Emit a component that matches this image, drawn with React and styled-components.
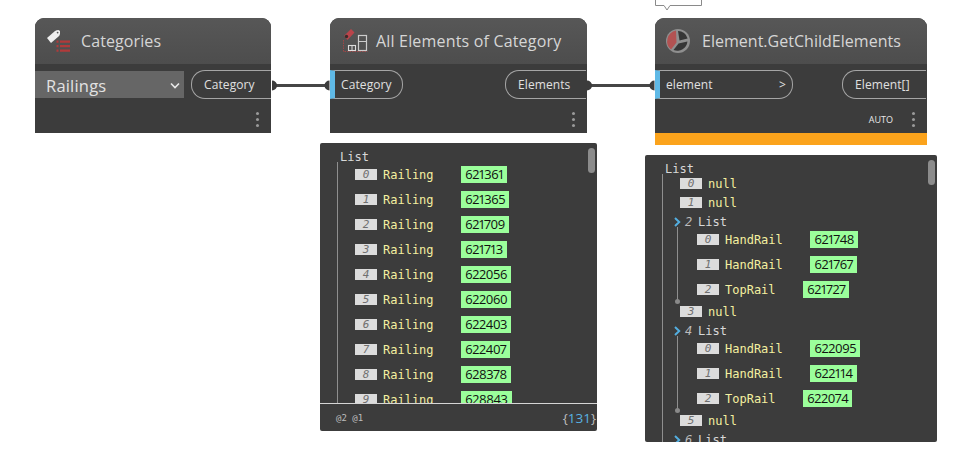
import React from "react";
import styled, { createGlobalStyle } from "styled-components";

const Global = createGlobalStyle`
  html, body { margin: 0; padding: 0; background: #fff; }
  body { font-family: "Open Sans", "Noto Sans", sans-serif; overflow: hidden; }
`;

const Canvas = styled.div`
  position: relative;
  width: 962px;
  height: 454px;
  overflow: hidden;
  background: #fff;
`;

const Node = styled.section`
  position: absolute;
  left: ${(p) => p.$x}px;
  top: 18px;
  width: ${(p) => p.$w}px;
  background: #3c3c3c;
  border-radius: 9px 9px 0 0;
  overflow: hidden;
`;

const Header = styled.header`
  height: 46px;
  display: flex;
  align-items: center;
  gap: ${(p) => p.$gap}px;
  padding-left: ${(p) => p.$pad}px;
  background: linear-gradient(#575757, #4d4d4d);
  color: #d6d6d6;
  font-size: 16px;
  line-height: 48px;
  letter-spacing: ${(p) => p.$ls}px;
`;

const Body = styled.div`
  height: 35px;
  padding-top: 6px;
  box-sizing: border-box;
  display: flex;
  justify-content: space-between;
  align-items: flex-start;
`;

const Footer = styled.footer`
  height: 34px;
  padding: 10px 12px 0 0;
  box-sizing: border-box;
  display: flex;
  justify-content: flex-end;
  align-items: flex-start;
  gap: 19px;
`;

const Dots = styled.span`
  display: flex;
  flex-direction: column;
  gap: 3px;
  width: 3px;
  margin-top: 3px;
  & > i {
    width: 3px;
    height: 3px;
    border-radius: 50%;
    background: #9a9a9a;
  }
`;

const Auto = styled.span`
  color: #e8e8e8;
  font-size: 9px;
  line-height: 22px;
`;

const ErrorBar = styled.div`
  height: 12px;
  background: #fba31c;
`;

const Dropdown = styled.div`
  width: 149px;
  height: 27px;
  margin-top: 1px;
  padding: 2px 3px 0 11px;
  box-sizing: border-box;
  display: flex;
  align-items: center;
  justify-content: space-between;
  background: #666;
  color: #e2e2e2;
  font-size: 16.5px;
  line-height: 25px;
  letter-spacing: 0.2px;
`;

const OutPort = styled.div`
  width: ${(p) => p.$w}px;
  height: 29px;
  margin-right: ${(p) => p.$mr || 0}px;
  padding-left: 12px;
  box-sizing: border-box;
  display: flex;
  align-items: center;
  color: #e0e0e0;
  font-size: 12px;
  letter-spacing: 0.1px;
  border: 1px solid #a5a5a5;
  border-right: none;
  border-radius: 14px 0 0 14px;
`;

const InPort = styled.div`
  width: ${(p) => p.$w}px;
  height: 29px;
  padding: 0 6px 0 6px;
  box-sizing: border-box;
  display: flex;
  align-items: center;
  justify-content: space-between;
  color: #e0e0e0;
  font-size: 12px;
  letter-spacing: 0.1px;
  border: 1px solid #a5a5a5;
  border-left: 5px solid #5fb9e6;
  border-radius: 0 14px 14px 0;
`;

const Wires = styled.svg`
  position: absolute;
  left: 0;
  top: 0;
  pointer-events: none;
`;

const Bubble = styled.svg`
  position: absolute;
  left: 655px;
  top: -1px;
`;

const Watch = styled.section`
  position: absolute;
  left: ${(p) => p.$x}px;
  top: ${(p) => p.$y}px;
  width: ${(p) => p.$w}px;
  height: ${(p) => p.$h}px;
  background: #3c3c3c;
  border-radius: 2px;
  display: flex;
  flex-direction: column;
  font-family: "DejaVu Sans Mono", "Liberation Mono", monospace;
`;

const Scroll = styled.div`
  position: absolute;
  right: 2px;
  top: 5px;
  width: 7px;
  height: 25px;
  border-radius: 4px;
  background: #8c8c8c;
`;

const Viewport = styled.div`
  flex: 1;
  min-height: 0;
  overflow: hidden;
  padding: ${(p) => p.$top}px 0 0 20px;
`;

const ListTitle = styled.div`
  color: #d8d8d8;
  font-size: 12px;
  line-height: 14px;
`;

const Tree = styled.div`
  position: relative;
  margin-left: -3px;
  padding-left: ${(p) => p.$pad}px;
  border-left: 1px solid #8f8f8f;
  display: flex;
  flex-direction: column;
  margin-top: ${(p) => p.$mt || 0}px;
`;

const EndDot = styled.i`
  position: absolute;
  left: -3px;
  bottom: -2px;
  width: 5px;
  height: 5px;
  border-radius: 50%;
  background: #8a8a8a;
`;

const Row = styled.div`
  height: ${(p) => p.$h}px;
  display: flex;
  align-items: center;
  flex: none;
`;

const Index = styled.span`
  flex: none;
  width: 22px;
  height: 11px;
  margin-right: 6px;
  background: #dcdcdc;
  color: #707070;
  font-size: 11px;
  font-style: italic;
  line-height: 11px;
  text-align: center;
`;

const Label = styled.span`
  color: #f4f0a0;
  font-size: 12px;
`;

const Value = styled.span`
  flex: none;
  margin-left: 27.7px;
  height: 17px;
  padding: 0 4px;
  background: #9bff9b;
  color: #111;
  font-family: "Open Sans", "Noto Sans", sans-serif;
  font-size: 13px;
  font-variant-numeric: proportional-nums;
  letter-spacing: -0.4px;
  line-height: 16px;
`;

const SubHead = styled.div`
  height: 19px;
  display: flex;
  align-items: center;
  flex: none;
  margin-left: -6px;
  color: #d8d8d8;
  font-size: 12px;
`;

const SubIndex = styled.span`
  width: 17px;
  padding-left: 4px;
  box-sizing: border-box;
  font-style: italic;
  color: #bdbdbd;
`;

const WatchFoot = styled.footer`
  flex: none;
  height: 28px;
  box-sizing: border-box;
  border-top: 1px solid #d6d6d6;
  padding: 0 1px 0 16px;
  display: flex;
  align-items: center;
  justify-content: space-between;
`;

const Levels = styled.span`
  color: #bdbdbd;
  font-size: 9px;
`;

const Count = styled.span`
  color: #bdbdbd;
  font-size: 13.5px;
  font-family: "Open Sans", sans-serif;
  & > b {
    font-weight: 400;
    color: #58b2e2;
  }
`;

const Chevron = () => (
  <svg width="12" height="8" viewBox="0 0 12 8">
    <path d="M2 1.5 L6 5.5 L10 1.5" fill="none" stroke="#e8e8e8" strokeWidth="1.6" />
  </svg>
);

const Expand = () => (
  <svg width="7" height="10" viewBox="0 0 7 10">
    <path d="M1 1 L5.2 5 L1 9" fill="none" stroke="#53aee0" strokeWidth="2" />
  </svg>
);

const CategoriesIcon = () => (
  <svg width="30" height="30" viewBox="0 0 30 30">
    <path d="M4 12 L12 5 Q13.5 4 15.5 4 L17 5 L17 8 Q16.5 9.5 15.5 10.5 L8 17 Z" fill="#eee" />
    <circle cx="14.6" cy="6.6" r="0.9" fill="#555" />
    <path d="M13.5 14.5h2v2.2h-2zM13.5 19h2v2.2h-2zM13.5 23.5h2v2.2h-2z" fill="#b13a3a" />
    <path d="M17 14.5h10v2.2H17zM17 19h10v2.2H17zM17 23.5h10v2.2H17z" fill="#b13a3a" />
  </svg>
);

const ElementsIcon = () => (
  <svg width="30" height="26" viewBox="0 0 30 26">
    <path d="M6 8 L13 1 L16.5 4.5 L9.5 12 Z" fill="#b9444a" />
    <circle cx="8.5" cy="8.5" r="1.7" fill="#3a2a2a" />
    <path d="M5.5 12v11.5h24" fill="none" stroke="#a04646" strokeWidth="1" strokeDasharray="1.5 1" />
    <rect x="10.5" y="17.5" width="7" height="5" fill="none" stroke="#ddd" strokeWidth="1.1" />
    <path d="M14 17.5v5" stroke="#ddd" strokeWidth="1" />
    <rect x="20.5" y="7.5" width="8" height="15" fill="none" stroke="#ccc" strokeWidth="1.2" />
    <path d="M20.5 13.5h8" stroke="#ccc" strokeWidth="1" />
  </svg>
);

const ChildIcon = () => (
  <svg width="26" height="26" viewBox="0 0 26 26">
    <circle cx="13" cy="13" r="12" fill="#8f8f8f" />
    <path d="M11 2.4 A11 11 0 0 0 6 21.5 L11.5 14.5 Z" fill="#b25252" />
    <path d="M13 3 A10 10 0 0 1 22.6 10.5 L14.5 12.4 Z" fill="#363636" />
    <path d="M22.4 13.5 A10 10 0 0 1 8.5 22 L13.5 15.6 Z" fill="#363636" />
  </svg>
);

const Menu = () => (
  <Dots>
    <i />
    <i />
    <i />
  </Dots>
);

const Item = ({ i, label, value, h }) => (
  <Row $h={h}>
    <Index>{i}</Index>
    <Label>{label}</Label>
    {value && <Value>{value}</Value>}
  </Row>
);

const railings = ["621361", "621365", "621709", "621713", "622056", "622060", "622403", "622407", "628378", "628843"];

const children = [
  { i: 0, null: true },
  { i: 1, null: true },
  { i: 2, items: [["HandRail", "621748"], ["HandRail", "621767"], ["TopRail", "621727"]] },
  { i: 3, null: true },
  { i: 4, items: [["HandRail", "622095"], ["HandRail", "622114"], ["TopRail", "622074"]] },
  { i: 5, null: true },
  { i: 6, items: [] },
];

const App = () => (
  <Canvas>
    <Global />
    <Bubble width="48" height="13" viewBox="0 0 48 13">
      <path d="M0.5 0 V6.5 H9 L12 11 L15 6.5 H46.5 V0" fill="#fff" stroke="#8a8a8a" />
    </Bubble>

    <Wires width="962" height="454">
      <path d="M273 85.5H328M590 85.5H653" stroke="#464646" strokeWidth="3" />
      <path d="M272 80.5 A5 5 0 0 1 272 90.5 Z M329.5 80.5 A5 5 0 0 0 329.5 90.5 Z M587 80.5 A5 5 0 0 1 587 90.5 Z M654.5 80.5 A5 5 0 0 0 654.5 90.5 Z" fill="#3c3c3c" />
    </Wires>

    <Node $x={35} $w={236}>
      <Header $gap={8} $pad={8} $ls={0.1}>
        <CategoriesIcon />
        Categories
      </Header>
      <Body>
        <Dropdown>
          Railings
          <Chevron />
        </Dropdown>
        <OutPort $w={80}>Category</OutPort>
      </Body>
      <Footer>
        <Menu />
      </Footer>
    </Node>

    <Node $x={330} $w={257}>
      <Header $gap={8} $pad={8} $ls={0.18}>
        <ElementsIcon />
        All Elements of Category
      </Header>
      <Body>
        <InPort $w={73}>Category</InPort>
        <OutPort $w={81} $mr={1}>Elements</OutPort>
      </Body>
      <Footer>
        <Menu />
      </Footer>
    </Node>

    <Node $x={655} $w={272}>
      <Header $gap={11} $pad={10} $ls={0.02}>
        <ChildIcon />
        Element.GetChildElements
      </Header>
      <Body>
        <InPort $w={138}>
          element
          <span>&gt;</span>
        </InPort>
        <OutPort $w={84} $mr={1}>Element[]</OutPort>
      </Body>
      <Footer>
        <Auto>AUTO</Auto>
        <Menu />
      </Footer>
      <ErrorBar />
    </Node>

    <Watch $x={320} $y={143} $w={277} $h={288}>
      <Scroll />
      <Viewport $top={7}>
        <ListTitle>List</ListTitle>
        <Tree $pad={17} $mt={-2}>
          {railings.map((v, i) => (
            <Item key={v} i={i} label="Railing" value={v} h={25} />
          ))}
        </Tree>
      </Viewport>
      <WatchFoot>
        <Levels>@2 @1</Levels>
        <Count>
          {"{"}
          <b>131</b>
          {"}"}
        </Count>
      </WatchFoot>
    </Watch>

    <Watch $x={645} $y={155} $w={292} $h={287}>
      <Scroll />
      <Viewport $top={7}>
        <ListTitle>List</ListTitle>
        <Tree $pad={17} $mt={-2}>
          {children.map((c) =>
            c.null ? (
              <Item key={c.i} i={c.i} label="null" h={19} />
            ) : (
              <React.Fragment key={c.i}>
                <SubHead>
                  <Expand />
                  <SubIndex>{c.i}</SubIndex>
                  List
                </SubHead>
                {c.items.length > 0 && (
                  <Tree $pad={19} $mt={-4}>
                    {c.items.map(([l, v], n) => (
                      <Item key={v} i={n} label={l} value={v} h={25} />
                    ))}
                    <EndDot />
                  </Tree>
                )}
              </React.Fragment>
            )
          )}
        </Tree>
      </Viewport>
    </Watch>
  </Canvas>
);

export default App;
